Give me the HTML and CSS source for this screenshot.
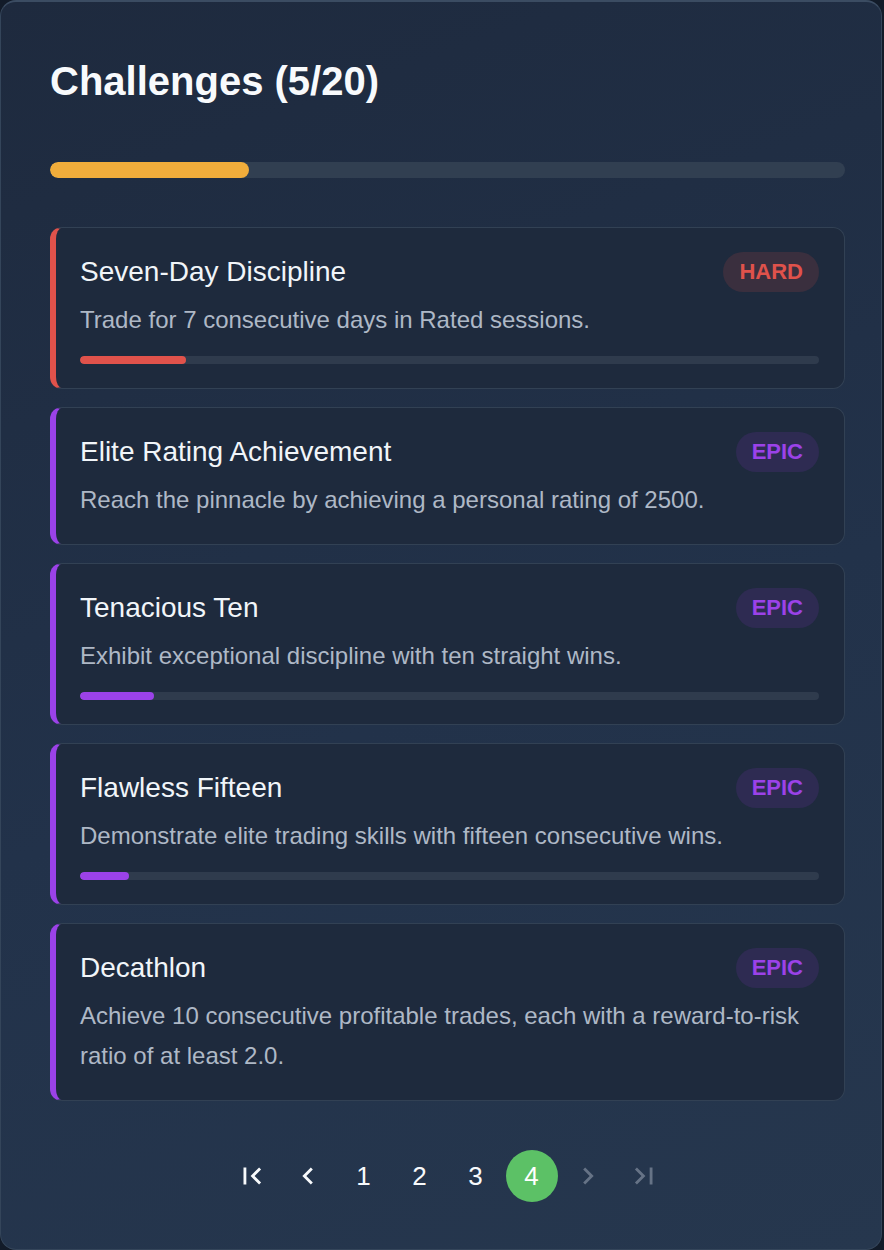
FILE: index.html
```html
<!DOCTYPE html>
<html lang="en">
<head>
<meta charset="utf-8">
<title>Challenges</title>
<link rel="stylesheet" href="styles.css">
</head>
<body>
<div class="panel">
  <h2 class="panel-title">Challenges (5/20)</h2>
  <div class="overall-track"><div class="overall-fill" style="width:25%"></div></div>

  <ul class="challenge-list">
    <li class="card card-hard">
      <div class="card-head">
        <span class="card-title">Seven-Day Discipline</span>
        <span class="badge badge-hard">HARD</span>
      </div>
      <p class="card-desc">Trade for 7 consecutive days in Rated sessions.</p>
      <div class="track"><div class="fill fill-hard" style="width:14.3%"></div></div>
    </li>
    <li class="card card-epic">
      <div class="card-head">
        <span class="card-title">Elite Rating Achievement</span>
        <span class="badge badge-epic">EPIC</span>
      </div>
      <p class="card-desc">Reach the pinnacle by achieving a personal rating of 2500.</p>
    </li>
    <li class="card card-epic">
      <div class="card-head">
        <span class="card-title">Tenacious Ten</span>
        <span class="badge badge-epic">EPIC</span>
      </div>
      <p class="card-desc">Exhibit exceptional discipline with ten straight wins.</p>
      <div class="track"><div class="fill fill-epic" style="width:10%"></div></div>
    </li>
    <li class="card card-epic">
      <div class="card-head">
        <span class="card-title">Flawless Fifteen</span>
        <span class="badge badge-epic">EPIC</span>
      </div>
      <p class="card-desc">Demonstrate elite trading skills with fifteen consecutive wins.</p>
      <div class="track"><div class="fill fill-epic" style="width:6.67%"></div></div>
    </li>
    <li class="card card-epic">
      <div class="card-head">
        <span class="card-title">Decathlon</span>
        <span class="badge badge-epic">EPIC</span>
      </div>
      <p class="card-desc">Achieve 10 consecutive profitable trades, each with a reward-to-risk ratio of at least 2.0.</p>
    </li>
  </ul>

  <nav class="pager">
    <span class="pg pg-icon">
      <svg viewBox="0 0 24 24" width="34" height="34"><path d="M18.41 16.59L13.82 12l4.59-4.59L17 6l-6 6 6 6zM6 6h2v12H6z"/></svg>
    </span>
    <span class="pg pg-icon">
      <svg viewBox="0 0 24 24" width="34" height="34"><path d="M15.41 7.41L14 6l-6 6 6 6 1.41-1.41L10.83 12z"/></svg>
    </span>
    <span class="pg">1</span>
    <span class="pg">2</span>
    <span class="pg">3</span>
    <span class="pg pg-active">4</span>
    <span class="pg pg-icon pg-disabled">
      <svg viewBox="0 0 24 24" width="34" height="34"><path d="M10 6L8.59 7.41 13.17 12l-4.58 4.59L10 18l6-6z"/></svg>
    </span>
    <span class="pg pg-icon pg-disabled">
      <svg viewBox="0 0 24 24" width="34" height="34"><path d="M5.59 7.41L10.18 12l-4.59 4.59L7 18l6-6-6-6zM16 6h2v12h-2z"/></svg>
    </span>
  </nav>
</div>
</body>
</html>
```

FILE: styles.css
```css
* { box-sizing: border-box; }

html, body {
  margin: 0;
  padding: 0;
  background: #121b29;
}

body {
  font-family: "Liberation Sans", Arial, sans-serif;
  color: #f1f5f9;
}

.panel {
  width: 882px;
  height: 1250px;
  border: 1px solid #34455a;
  border-top-width: 2px;
  border-top-color: #3b4c62;
  border-radius: 16px;
  background: linear-gradient(160deg, #1e2a3e 0%, #22324a 55%, #26374e 100%);
  padding: 55px 36px 47px 49px;
}

.panel-title {
  margin: 0;
  font-size: 40px;
  line-height: 48px;
  font-weight: 700;
  color: #f8fafc;
}

.overall-track {
  margin-top: 57px;
  height: 16px;
  border-radius: 8px;
  background: #313f51;
  overflow: hidden;
}

.overall-fill {
  height: 100%;
  border-radius: 8px;
  background: #f1ad3b;
}

.challenge-list {
  list-style: none;
  margin: 49px 0 0;
  padding: 0;
  display: flex;
  flex-direction: column;
  gap: 18px;
}

.card {
  background: #1e2a3d;
  border: 1px solid #324154;
  border-left-width: 6px;
  border-radius: 12px;
  padding: 24px 25px 24px 24px;
}

.card-hard { border-left-color: #e0524b; }
.card-epic { border-left-color: #9b42e8; }

.card-head {
  display: flex;
  align-items: center;
  justify-content: space-between;
  height: 40px;
}

.card-title {
  font-size: 28px;
  line-height: 34px;
  color: #f1f5f9;
}

.badge {
  height: 40px;
  line-height: 40px;
  padding: 0 16px;
  border-radius: 20px;
  font-size: 22px;
  font-weight: 700;
}

.badge-hard {
  color: #e0524b;
  background: #3a2f3e;
}

.badge-epic {
  color: #9b42e8;
  background: #2e2b52;
}

.card-desc {
  margin: 8px 0 0;
  font-size: 24px;
  line-height: 40px;
  color: #aeb8c6;
}

.track {
  margin-top: 16px;
  height: 8px;
  border-radius: 4px;
  background: #2f3b4d;
  overflow: hidden;
}

.fill {
  height: 100%;
  border-radius: 4px;
}

.fill-hard { background: #e0524b; }
.fill-epic { background: #9b42e8; }

.pager {
  margin-top: 49px;
  display: flex;
  justify-content: center;
  gap: 4px;
}

.pg {
  width: 52px;
  height: 52px;
  border-radius: 50%;
  display: flex;
  align-items: center;
  justify-content: center;
  font-size: 26px;
  color: #f8fafc;
}

.pg-icon svg { fill: #f8fafc; display: block; }

.pg-disabled svg { fill: #667386; }

.pg-active {
  background: #5cc166;
  color: #ffffff;
}
```
